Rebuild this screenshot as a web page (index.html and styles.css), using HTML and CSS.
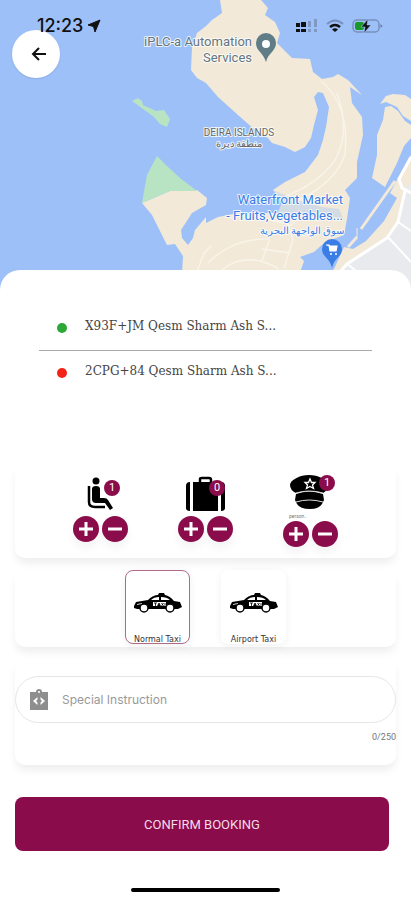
FILE: index.html
```html
<!DOCTYPE html>
<html lang="en">
<head>
    <meta charset="UTF-8" />
    <meta name="viewport" content="width=device-width, initial-scale=1" />
    <title>Confirm Booking</title>
    <link rel="stylesheet" href="styles.css">
</head>
<body>
    <header class="map">
        <svg class="map-canvas" viewBox="0 0 411 290" preserveAspectRatio="xMidYMin slice" role="img" aria-label="Map">
            <rect width="411" height="290" fill="#9dc0f9" />
            <!-- islands -->
            <g fill="#f2e9d8">
                <path d="M220 0L222 13 212 20 206 26 197 33 192 47 191 70 197 78 206 83 218 97 238 115 255 130 268 138 272 143 285 147 295 152 305 147 311 138 314 125 318 110 314 97 318 92 323 93 329 107 326 127 323 140 318 155 305 172 285 182 273 190 282 202 278 213 238 213 218 217 206 223 206 217 195 230 193 238 188 245 182 238 181 230 192 213 206 205 207 198 197 190 170 191 142 203 152 215 167 245 175 244 183 256 181 290H294L304 261 300 257 314 252 324 243 344 235 347 219 350 198 345 190 357 178 357 162 363 135 362 117 352 103 350 87 362 95 348 80 338 74 333 77 322 79 313 72 310 59 292 58 277 43 280 33 275 22 265 15 268 8 261 0Z" />
                <path d="M380 104L386 96 393 94 405 95 411 99V121L403 116 397 107 386 102Z" />
                <path d="M385 107L391 106 398 111 405 121 411 125V138L404 146 397 163 385 187 372 178 377 155 377 135 383 120Z" />
                <path d="M411 155L398 178 390 193 397 198 384 221 366 241 353 249 344 247 334 269 318 290H411Z" />
            </g>
            <path d="M273 190L282 202 277 213 285 217 316 216 343 218 339 209 322 207 299 201Z" fill="#b9d0ef" opacity=".55" />
            <path d="M157 156L147 175 142 203 170 191H197L180 178 167 166Z" fill="#b9e4c4" />
            <path d="M132 101L138 98 142 101 143 105 156 111 164 110 170 119 167 127 160 124 154 117 139 106Z" fill="#b9e4c4" />
            <path d="M411 182L404 190 398 222 387 238 348 263 325 290H411Z" fill="#e8eaed" />
            <!-- roads -->
            <g fill="none" stroke="#f9f4e9" stroke-width="1.5">
                <path d="M321 81Q350 105 345 154Q337 181 299 200" />
                <path d="M337 93Q351 132 335 160Q319 183 286 196" />
                <path d="M191 288L204 253 211 246M208 263Q232 238 270 239M222 270Q246 250 279 269" />
                <path d="M262 218L288 224 293 240 284 268M288 227L304 215M262 249L290 253M270 239L262 261" />
            </g>
            <path d="M348 247L357 237M361 229L395 181" stroke="#f2e9d8" stroke-width="3" />
            <path d="M357 237V228" stroke="#f2e9d8" stroke-width="1" />
            <g fill="none" stroke="#fff" stroke-width="3">
                <path d="M411 157L399 179 402 188 411 193M405 191L398 222 387 238 347 264 326 288" />
                <path d="M398 222L411 231M387 236L411 262M347 264L363 276" stroke-width="2" />
            </g>
            <!-- place pins -->
            <path d="M266 62C263 52 256 51 256 43A10 10 0 0 1 276 43C276 51 268 53 266 62Z" fill="#607d87" />
            <circle cx="266" cy="44" r="4" fill="#fff" />
            <path d="M332 268C330 258 322 257 322 249A10 10 0 0 1 342 249C342 257 334 258 332 268Z" fill="#397de5" />
            <path d="M326 245H329L330 251H336L337 246H329" fill="#fff" stroke="#fff" stroke-width="1.2" />
            <circle cx="331" cy="254" r="1" fill="#fff" /><circle cx="336" cy="254" r="1" fill="#fff" />
            <g class="place grey">
                <text x="252" y="46" text-anchor="end">iPLC-a Automation</text>
                <text x="252" y="62" text-anchor="end">Services</text>
            </g>
            <g class="area">
                <text x="239" y="136" text-anchor="middle">DEIRA ISLANDS</text>
                <text x="239" y="147" text-anchor="middle">منطقة ديرة</text>
            </g>
            <g class="place blue">
                <text x="343" y="204" text-anchor="end">Waterfront Market</text>
                <text x="343" y="220" text-anchor="end">- Fruits,Vegetables...</text>
                <text class="arabic" x="302" y="234" text-anchor="middle">سوق الواجهة البحرية</text>
            </g>
        </svg>
        <div class="status">
            <div class="status-left">
                <span class="time">12:23</span>
                <svg width="14" height="14" viewBox="0 0 14 14"><path d="M13 1L8 13 6.500 7.500 1 6Z" fill="#111" stroke="#111" stroke-linejoin="round" /></svg>
            </div>
            <div class="status-right">
                <svg width="22" height="14" viewBox="0 0 22 14">
                    <path d="M0 4H4V8H0ZM5 3H10V8H5ZM0 10H4V13H0ZM5 10H10V13H5Z" fill="#111" />
                    <path d="M12 2H15V8H12ZM18 0H21V8H18ZM12 10H15V13H12ZM18 10H21V13H18Z" fill="#7f98c4" />
                </svg>
                <svg width="18" height="14" viewBox="0 0 18 14" fill="none">
                    <path d="M1 5Q9 -2 17 5" stroke="#7890bc" stroke-width="2" />
                    <path d="M4 8Q9 4 14 8" stroke="#111" stroke-width="2.500" />
                    <path d="M6 10.500Q9 8 12 10.500L9 13Z" fill="#111" />
                </svg>
                <svg width="31" height="16" viewBox="0 0 31 16">
                    <rect x="1" y="2" width="26" height="12" rx="4" fill="none" stroke="#7890bc" stroke-width="1.500" />
                    <path d="M28.500 6V10L30.500 8Z" fill="#60779f" />
                    <rect x="3" y="4" width="9" height="8" rx="2" fill="#189a2a" />
                    <path d="M16 1L9 9H13L12 15 19 7H15Z" fill="#111" stroke="#9dc0f9" stroke-width=".6" />
                </svg>
            </div>
        </div>
        <button class="back" type="button" aria-label="Back">
            <svg width="16" height="16" viewBox="0 0 16 16" fill="none" stroke="#111" stroke-width="2"><path d="M15 8H2M8 2L2 8 8 14" /></svg>
        </button>
    </header>

    <main class="sheet">
        <ul class="route">
            <li class="stop"><span class="dot pickup"></span>X93F+JM Qesm Sharm Ash S...</li>
            <li class="stop"><span class="dot dropoff"></span>2CPG+84 Qesm Sharm Ash S...</li>
        </ul>

        <form class="booking">
            <section class="card counters">
                <div class="counter">
                    <div class="counter-icon">
                        <svg width="46" height="38" viewBox="0 0 46 38">
                            <circle cx="18" cy="5" r="3.500" fill="#000" />
                            <path d="M14 13Q14 10 18 10Q22 10 22 13V22H26Q29 22 30 24L35 32 32 34 27 27H18Q14 27 14 23Z" fill="#000" />
                            <path d="M11 10V26Q11 31 17 31H27" fill="none" stroke="#000" stroke-width="2.500" />
                        </svg>
                        <span class="badge">1</span>
                    </div>
                    <div class="steps">
                        <button class="step" type="button" aria-label="Add passenger"><svg width="16" height="16" viewBox="0 0 16 16"><path d="M8 1V15M1 8H15" /></svg></button>
                        <button class="step" type="button" aria-label="Remove passenger"><svg width="16" height="16" viewBox="0 0 16 16"><path d="M1 8H15" /></svg></button>
                    </div>
                </div>
                <div class="counter">
                    <div class="counter-icon">
                        <svg width="46" height="38" viewBox="0 0 46 38">
                            <path d="M17 7V3Q17 2 19 2H26Q28 2 28 4V7" fill="none" stroke="#000" stroke-width="2.500" />
                            <path d="M7 6V35Q3 35 3 32V10Q3 6 7 6ZM10 6H35V35H10ZM38 6Q42 6 42 10V32Q42 35 38 35Z" fill="#000" />
                        </svg>
                        <span class="badge">0</span>
                    </div>
                    <div class="steps">
                        <button class="step" type="button" aria-label="Add bag"><svg width="16" height="16" viewBox="0 0 16 16"><path d="M8 1V15M1 8H15" /></svg></button>
                        <button class="step" type="button" aria-label="Remove bag"><svg width="16" height="16" viewBox="0 0 16 16"><path d="M1 8H15" /></svg></button>
                    </div>
                </div>
                <div class="counter">
                    <div class="counter-icon cap">
                        <svg width="46" height="38" viewBox="0 0 46 38">
                            <path d="M2 11C2 6 12 1 21 1S40 6 40 11Q40 16 35 19Q21 15 8 19Q2 16 2 11Z" fill="#000" />
                            <path d="M8 20Q21 15 35 20L36 26 34 30Q31 35 22 35Q12 35 9 30L7 26Z" fill="#000" />
                            <path d="M8 19Q21 15 35 19M8 28Q21 24 35 28" fill="none" stroke="#ddd" />
                            <path d="M22 5L23.500 8.500H27L24.500 11 25.500 14.500 22 12.500 18.500 14.500 19.500 11 17 8.500H20.500Z" fill="#000" stroke="#fff" stroke-width="1.300" />
                        </svg>
                        <span class="badge">1</span>
                    </div>
                    <span class="caption">person..</span>
                    <div class="steps">
                        <button class="step" type="button" aria-label="Add captain"><svg width="16" height="16" viewBox="0 0 16 16"><path d="M8 1V15M1 8H15" /></svg></button>
                        <button class="step" type="button" aria-label="Remove captain"><svg width="16" height="16" viewBox="0 0 16 16"><path d="M1 8H15" /></svg></button>
                    </div>
                </div>
            </section>

            <section class="card vehicles">
                <label class="vehicle">
                    <input type="radio" name="vehicle" value="normal" checked />
                    <svg width="50" height="22" viewBox="0 0 50 22">
                        <path d="M1 14L3 10 15 8Q20 3 25 3L26 1H31L32 3Q37 4 41 9L47 10 49 15 45 17H4L1 16Z" fill="#000" />
                        <path d="M18 8Q21 5 26 5V8ZM28 5Q34 5 37 8H28Z" fill="#fff" />
                        <rect x="20" y="10" width="13" height="4" fill="#fff" />
                        <path d="M21 11H24M22.500 11V14M24.500 14L26 11 27.500 14M28.500 11L30.500 14M30.500 11L28.500 14M32 11V14" stroke="#000" stroke-width=".8" />
                        <path d="M4 12L9 11V12L4 13Z" fill="#ccc" />
                        <circle cx="11" cy="16" r="4" fill="#fff" stroke="#000" stroke-width="1.500" />
                        <circle cx="37" cy="16" r="4" fill="#fff" stroke="#000" stroke-width="1.500" />
                    </svg>
                    <span>Normal Taxi</span>
                </label>
                <label class="vehicle">
                    <input type="radio" name="vehicle" value="airport" />
                    <svg width="50" height="22" viewBox="0 0 50 22">
                        <path d="M1 14L3 10 15 8Q20 3 25 3L26 1H31L32 3Q37 4 41 9L47 10 49 15 45 17H4L1 16Z" fill="#000" />
                        <path d="M18 8Q21 5 26 5V8ZM28 5Q34 5 37 8H28Z" fill="#fff" />
                        <rect x="20" y="10" width="13" height="4" fill="#fff" />
                        <path d="M21 11H24M22.500 11V14M24.500 14L26 11 27.500 14M28.500 11L30.500 14M30.500 11L28.500 14M32 11V14" stroke="#000" stroke-width=".8" />
                        <path d="M4 12L9 11V12L4 13Z" fill="#ccc" />
                        <circle cx="11" cy="16" r="4" fill="#fff" stroke="#000" stroke-width="1.500" />
                        <circle cx="37" cy="16" r="4" fill="#fff" stroke="#000" stroke-width="1.500" />
                    </svg>
                    <span>Airport Taxi</span>
                </label>
            </section>

            <section class="card notes">
                <label class="field">
                    <svg width="20" height="22" viewBox="0 0 20 22">
                        <path d="M1 3H7Q7 0 10 0Q13 0 13 3H19V21H1Z" fill="#8e8e8e" />
                        <circle cx="10" cy="3" r="1" fill="#fff" />
                        <path d="M8.500 8V10.500L7 12 8.500 13.500V16L4 12ZM11.500 8V10.500L13 12 11.500 13.500V16L16 12Z" fill="#fff" />
                    </svg>
                    <input type="text" name="instruction" maxlength="250" placeholder="Special Instruction" aria-label="Special Instruction" />
                </label>
                <span class="count">0/250</span>
            </section>

            <button class="confirm" type="submit">CONFIRM BOOKING</button>
        </form>
        <div class="home-bar"></div>
    </main>
</body>
</html>
```

FILE: styles.css
```css
* {
    box-sizing: border-box;
}

body {
    margin: 0;
    background: #fff;
    font-family: Roboto, "Noto Sans", sans-serif;
    color: #333;
}

button {
    border: none;
    padding: 0;
    cursor: pointer;
}

svg {
    display: block;
    flex: none;
}

/* Map */
.map {
    position: relative;
    height: 290px;
    overflow: hidden;
    background: #9dc0f9;
}

.map-canvas {
    position: absolute;
    inset: 0;
    width: 100%;
    height: 100%;
}

.map-canvas text {
    paint-order: stroke;
    stroke: rgba(255, 255, 255, 0.8);
    stroke-width: 2px;
    stroke-linejoin: round;
}

.place {
    font-size: 13px;
}

.place.grey {
    fill: #65757e;
}

.place.blue {
    fill: #397de5;
}

.place .arabic {
    font-size: 10px;
}

.area {
    font-size: 10px;
    fill: #666;
}

.status {
    position: relative;
    z-index: 1;
    display: flex;
    justify-content: space-between;
    align-items: center;
    padding: 14px 28px 0 37px;
    pointer-events: none;
}

.status-left,
.status-right {
    display: flex;
    align-items: center;
}

.status-left {
    gap: 4px;
}

.status-right {
    gap: 8px;
}

.time {
    font-family: Inter, sans-serif;
    font-size: 18px;
    line-height: 24px;
    font-weight: 500;
    color: #111;
}

.back {
    position: absolute;
    left: 12px;
    top: 30px;
    display: grid;
    place-items: center;
    width: 48px;
    height: 48px;
    padding-left: 6px;
    border-radius: 50%;
    background: #fff;
    box-shadow: 0 1px 2px rgba(0, 0, 0, 0.1);
}

/* Bottom sheet */
.sheet {
    position: relative;
    margin-top: -20px;
    padding: 32px 15px 8px;
    border-radius: 20px 20px 0 0;
    background: #fff;
}

.route {
    list-style: none;
    margin: 0 24px 73px;
    padding: 0;
    font-family: "DejaVu Serif", serif;
    font-size: 12px;
    color: #444;
}

.stop {
    display: flex;
    align-items: center;
    gap: 18px;
    padding: 12px 18px;
    line-height: 24px;
}

.stop + .stop {
    padding: 8px 18px;
    border-top: 1px solid #aaa;
}

.dot {
    width: 10px;
    height: 10px;
    margin-top: 4px;
    border-radius: 50%;
}

.pickup {
    background: #2ca836;
}

.dropoff {
    background: #f42318;
}

.booking {
    display: flex;
    flex-direction: column;
    gap: 12px;
}

.card {
    border-radius: 10px;
    box-shadow: 0 6px 8px -1px rgba(0, 0, 0, 0.07);
}

.counters {
    display: flex;
    justify-content: center;
    gap: 50px;
    padding: 10px 0 11px;
}

.counter {
    width: 55px;
}

.counter-icon {
    position: relative;
    padding: 2px 0 2px 5px;
}

.counter-icon.cap {
    padding: 0 0 1px 5px;
}

.badge {
    position: absolute;
    right: 8px;
    top: 6px;
    width: 16px;
    height: 16px;
    border-radius: 50%;
    background: #8a0c4b;
    color: #fff;
    font-size: 11px;
    line-height: 16px;
    text-align: center;
}

.cap .badge {
    top: 1px;
    right: 3px;
}

.caption {
    display: block;
    height: 8px;
    padding-left: 6px;
    font-size: 5px;
    line-height: 6px;
    color: #777;
}

.steps {
    display: flex;
    gap: 3px;
}

.step {
    display: grid;
    place-items: center;
    width: 26px;
    height: 26px;
    border-radius: 50%;
    background: #8a0c4b;
    box-shadow: 0 6px 10px rgba(0, 0, 0, 0.05);
}

.step path {
    stroke: #fff;
    stroke-width: 3;
}

.vehicles {
    display: flex;
    justify-content: center;
    gap: 31px;
    padding-bottom: 3px;
}

.vehicle {
    position: relative;
    display: flex;
    flex-direction: column;
    align-items: center;
    justify-content: flex-end;
    gap: 22px;
    width: 65px;
    height: 74px;
    border: 1px solid transparent;
    border-radius: 8px;
    box-shadow: 0 2px 8px rgba(0, 0, 0, 0.06);
    font-size: 8px;
    line-height: 7px;
    font-family: "DejaVu Sans", sans-serif;
    cursor: pointer;
}

.vehicle:has(input:checked) {
    border-color: #b06a88;
}

.vehicle input {
    position: absolute;
    inset: 0;
    margin: 0;
    opacity: 0;
    cursor: pointer;
}

.notes {
    display: flex;
    flex-direction: column;
    padding: 17px 0 22px;
}

.field {
    display: flex;
    align-items: center;
    gap: 13px;
    height: 47px;
    padding: 0 13px;
    border: 1px solid #e6e6e6;
    border-radius: 24px;
}

.field input {
    flex: 1;
    min-width: 0;
    padding: 0;
    border: none;
    outline: none;
    background: none;
    font-family: Inter, sans-serif;
    font-size: 12px;
    color: #333;
}

.field input::placeholder {
    color: #999;
    opacity: 1;
}

.count {
    align-self: flex-end;
    margin-top: 8px;
    font-size: 9px;
    line-height: 12px;
    color: #777;
}

.confirm {
    height: 54px;
    margin: 20px 7px 0 0;
    border-radius: 8px;
    background: #8a0c4b;
    color: #f3dce7;
    font-family: inherit;
    font-size: 13px;
}

.home-bar {
    width: 149px;
    height: 4px;
    margin: 37px auto 0;
    border-radius: 2px;
    background: #000;
}
```
